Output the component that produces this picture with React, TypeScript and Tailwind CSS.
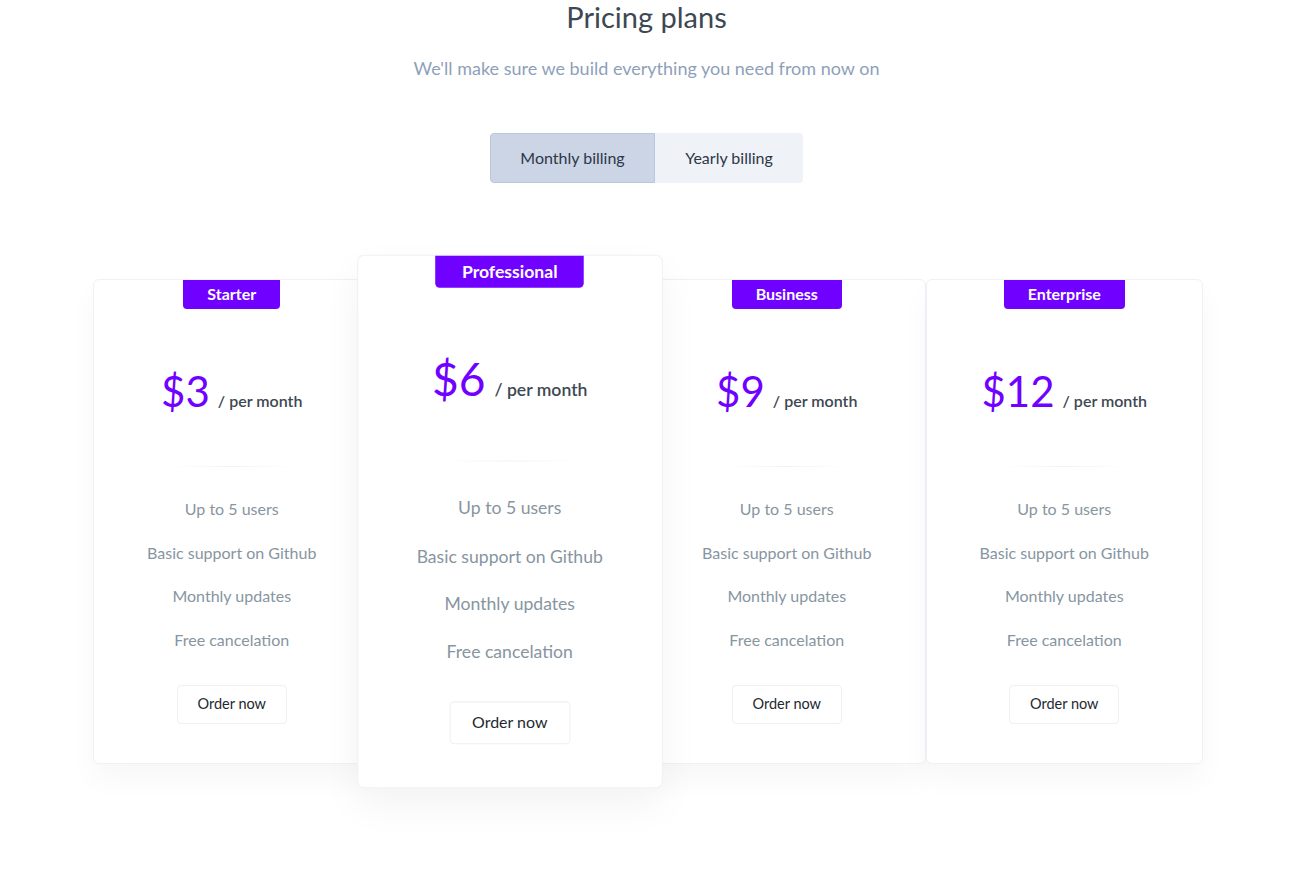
import { useState } from "react";

type Plan = {
    name: string;
    price: number;
    featured?: boolean;
};

const plans: Plan[] = [
    { name: "Starter", price: 3 },
    { name: "Professional", price: 6, featured: true },
    { name: "Business", price: 9 },
    { name: "Enterprise", price: 12 },
];

const features = ["Up to 5 users", "Basic support on Github", "Monthly updates", "Free cancelation"];

function PlanCard({ plan }: { plan: Plan }) {
    return (
        <div
            className={
                plan.featured
                    ? "relative z-10 scale-[1.1] flex flex-col items-center h-[485px] bg-white border border-[#eef1f6] rounded-[6px] shadow-[0_15px_35px_rgba(0,0,0,0.05)]"
                    : "relative flex flex-col items-center h-[485px] bg-white border border-[#eef1f6] rounded-[6px] shadow-[0_15px_30px_rgba(0,0,0,0.035)]"
            }
        >
            <div className="px-6 h-[29px] leading-[28px] text-[16px] font-bold text-white bg-[#7000ff] rounded-b-[4px]">
                {plan.name}
            </div>

            <div className="mt-[57px] h-[50px] flex items-baseline">
                <span className="text-[42px] leading-[50px] text-[#7000ff]">${plan.price}</span>
                <span className="ml-2 text-[16px] font-semibold text-[#3d4852]">/ per month</span>
            </div>

            <div className="mt-[50px] w-[124px] h-px bg-gradient-to-r from-transparent via-[#f0f2f6] to-transparent" />

            <ul className="mt-[32px] flex flex-col items-center gap-[23.5px]">
                {features.map((f) => (
                    <li key={f} className="text-[16px] leading-[20px] text-[#8795a1]">
                        {f}
                    </li>
                ))}
            </ul>

            <button className="mt-[35px] w-[110px] h-[39px] border border-[#eef0f5] rounded-[4px] bg-white text-[14.5px] text-[#22292f]">
                Order now
            </button>
        </div>
    );
}

export default function App() {
    const [billing, setBilling] = useState<"monthly" | "yearly">("monthly");

    return (
        <div className="min-h-screen bg-white font-['Lato',sans-serif] text-center">
            <h1 className="text-[29px] leading-[34px] text-[#3d4852]">Pricing plans</h1>
            <p className="mt-[20px] text-[18px] leading-[28px] text-[#8e9fba]">
                We'll make sure we build everything you need from now on
            </p>

            <div className="mt-[51px] flex justify-center">
                <div className="flex h-[50px] rounded-[4px] overflow-hidden bg-[#eff2f7]">
                    <button
                        onClick={() => setBilling("monthly")}
                        className={
                            billing === "monthly"
                                ? "w-[165px] text-[16px] text-[#2d3748] bg-[#cbd5e5] border border-[#bac6d9] rounded-l-[4px]"
                                : "w-[165px] text-[16px] text-[#2d3748]"
                        }
                    >
                        Monthly billing
                    </button>
                    <button
                        onClick={() => setBilling("yearly")}
                        className={
                            billing === "yearly"
                                ? "w-[148px] text-[16px] text-[#2d3748] bg-[#cbd5e5] border border-[#bac6d9] rounded-r-[4px]"
                                : "w-[148px] text-[16px] text-[#2d3748]"
                        }
                    >
                        Yearly billing
                    </button>
                </div>
            </div>

            <div className="mt-[96px] ml-[calc(50%-553.5px)] w-[1110px] grid grid-cols-4">
                {plans.map((p) => (
                    <PlanCard key={p.name} plan={p} />
                ))}
            </div>
        </div>
    );
}
